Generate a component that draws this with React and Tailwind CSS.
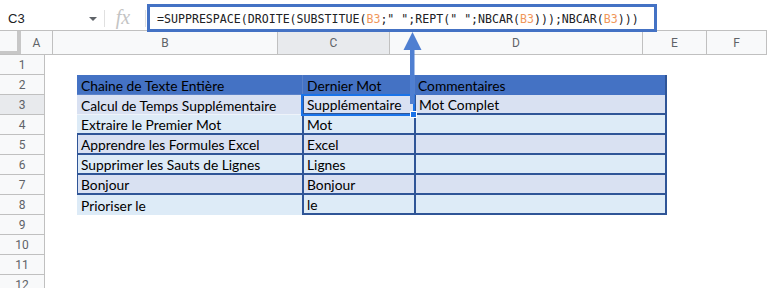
import React from "react";

const COLS = [
  { k: "A", w: 32 },
  { k: "B", w: 225 },
  { k: "C", w: 112 },
  { k: "D", w: 253 },
  { k: "E", w: 64 },
  { k: "F", w: 60 },
];

const DATA = [
  ["Calcul de Temps Supplémentaire", "Supplémentaire", "Mot Complet"],
  ["Extraire le Premier Mot", "Mot", ""],
  ["Apprendre les Formules Excel", "Excel", ""],
  ["Supprimer les Sauts de Lignes", "Lignes", ""],
  ["Bonjour", "Bonjour", ""],
  ["Prioriser le", "le", ""],
];

const cellFont = { fontFamily: "Lato, 'Open Sans', sans-serif" };

function Formula() {
  const o = "text-[#f0975a]";
  return (
    <span>
      =SUPPRESPACE(DROITE(SUBSTITUE(<span className={o}>B3</span>;" ";REPT(" ";NBCAR(
      <span className={o}>B3</span>)));NBCAR(<span className={o}>B3</span>)))
    </span>
  );
}

export default function App() {
  const rowBg = (i) => (i % 2 === 0 ? "bg-[#d9e1f2]" : "bg-[#ddebf7]");
  return (
    <div className="relative w-[767px] h-[288px] overflow-hidden bg-white" style={{ fontFamily: "Roboto, Arial, sans-serif" }}>
      {/* top bar */}
      <div className="flex h-[31px] border-b border-[#c0c0c0] items-start">
        <div className="w-[104px] h-full flex items-center pl-[8px] pr-[7px] pt-[8px]">
          <span className="text-[13px] text-[#202124]" style={{ fontFamily: "Arial, 'Liberation Sans', sans-serif" }}>C3</span>
          <span className="ml-auto w-0 h-0 border-l-[4px] border-r-[4px] border-t-[4px] border-l-transparent border-r-transparent border-t-[#5f6368]" />
        </div>
        <div className="w-px h-[17px] mt-[10px] bg-[#e0e0e0]" />
        <div className="w-[40px] h-full flex items-center justify-center pt-[4px] pr-[4px]">
          <span className="text-[20px] italic text-[#c4c4c4]" style={{ fontFamily: "'Liberation Serif', 'DejaVu Serif', serif" }}>fx</span>
        </div>
        <div className="w-px h-[17px] mt-[10px] bg-[#e0e0e0]" />
        <div className="relative z-10 ml-[1px] mt-[4px] w-[510px] h-[28px] border-[3px] border-[#4472c4] bg-white flex items-center pl-[7px] pt-[4px]">
          <span className="text-[11.6px] text-[#202124] whitespace-pre" style={{ fontFamily: "'DejaVu Sans Mono', monospace" }}>
            <Formula />
          </span>
        </div>
      </div>

      {/* column header */}
      <div className="flex h-[24px] bg-[#f8f9fa] border-b border-[#c0c0c0]">
        <div className="w-[45px] h-full border-r-[4px] border-b-[3px] border-[#c7c7c7] bg-[#f8f9fa]" />
        {COLS.map((c) => (
          <div
            key={c.k}
            className={`h-full shrink-0 flex items-center justify-center text-[12px] text-[#5f6368] border-r border-[#c0c0c0] ${c.k === "C" ? "bg-[#e8eaed]" : ""}`}
            style={{ width: c.w }}
          >
            {c.k}
          </div>
        ))}
      </div>

      {/* rows */}
      {Array.from({ length: 12 }).map((_, r) => {
        const rowNum = r + 1;
        return (
          <div key={r} className="flex h-[20px]">
            <div className={`w-[45px] shrink-0 h-full flex items-center justify-center text-[12px] text-[#5f6368] border-r border-b border-[#c0c0c0] box-border ${rowNum === 3 ? "bg-[#e8eaed]" : "bg-[#f8f9fa]"}`}>
              {rowNum}
            </div>
            <div className="w-[32px] shrink-0 h-full" />
            {rowNum === 2 ? (
              <>
                <div className="w-[225px] shrink-0 h-full bg-[#4472c4] flex items-center pl-[4px] pt-[3px] text-[13.8px] text-black border-b border-[#5b82c9] box-border" style={cellFont}>
                  Chaine de Texte Entière
                </div>
                <div className="w-[112px] shrink-0 h-full bg-[#4472c4] flex items-center pl-[4px] pt-[3px] text-[13.8px] text-black border-l border-[#5b82c9] box-border" style={cellFont}>
                  Dernier Mot
                </div>
                <div className="w-[253px] shrink-0 h-full bg-[#4472c4] flex items-center pl-[3px] pt-[3px] text-[13.8px] text-black border-l border-r-2 border-l-[#5b82c9] border-r-[#2f5597] box-border" style={cellFont}>
                  Commentaires
                </div>
              </>
            ) : rowNum >= 3 && rowNum <= 8 ? (
              (() => {
                const i = rowNum - 3;
                const d = DATA[i];
                const bBorder =
                  rowNum >= 5 && rowNum <= 7
                    ? "border-l border-b-2 border-[#2f5597] pl-[3px]"
                    : rowNum === 4
                    ? "border-b-2 border-[#2f5597] pl-[4px]"
                    : rowNum === 3
                    ? "border-b border-[#eef3fa] pl-[4px]"
                    : "pl-[4px]";
                return (
                  <>
                    <div className={`w-[225px] shrink-0 h-full ${rowBg(i)} ${bBorder} box-border flex items-center pt-[3px] text-[13.8px] text-black`} style={cellFont}>
                      {d[0]}
                    </div>
                    <div className={`w-[112px] shrink-0 h-full ${rowBg(i)} border-l-2 border-b-2 border-[#2f5597] box-border flex items-center pl-[3px] pt-[3px] text-[13.8px] text-black`} style={cellFont}>
                      {d[1]}
                    </div>
                    <div className={`w-[253px] shrink-0 h-full ${rowBg(i)} border-l-2 border-r-2 border-b-2 border-[#2f5597] box-border flex items-center pl-[3px] pt-[3px] text-[13.8px] text-black`} style={cellFont}>
                      {d[2]}
                    </div>
                  </>
                );
              })()
            ) : null}
          </div>
        );
      })}

      {/* selection on C3 */}
      <div className="absolute left-[301px] top-[94px] w-[114px] h-[22px] border-2 border-[#1a73e8] pointer-events-none" />
      <div className="absolute left-[410px] top-[111px] w-[7px] h-[7px] bg-[#1a73e8] border border-white" />

      {/* arrow */}
      <svg className="absolute left-[403px] top-[31px]" width="22" height="75" viewBox="0 0 22 75">
        <rect x="7" y="17" width="4.5" height="56" fill="#4f7fd1" />
        <polygon points="9.5,1 18.5,19 0.5,19" fill="#4f7fd1" />
      </svg>
    </div>
  );
}
